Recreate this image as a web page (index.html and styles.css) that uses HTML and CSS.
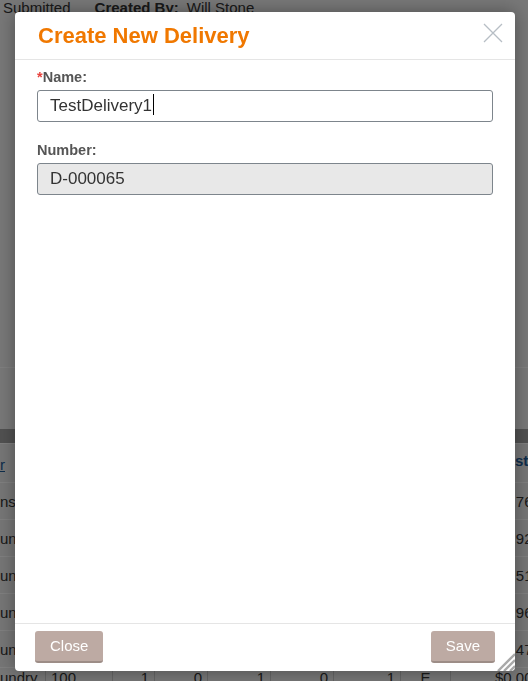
FILE: index.html
```html
<!DOCTYPE html>
<html>
<head>
    <title>Create New Delivery</title>
    <meta charset="UTF-8">
    <link rel="stylesheet" href="styles.css">
</head>
<body>
    <div class="page">
        <div class="summary">
            <div class="meta">
                <span>Submitted</span>
                <span class="meta-label">Created By:</span>
                <span>Will Stone</span>
            </div>
        </div>
        <div class="toolbar"></div>

        <div class="grid">
            <div class="grid-row grid-head">
                <div class="cell"><a href="#">r</a></div>
                <div class="cell"></div><div class="cell"></div><div class="cell"></div>
                <div class="cell"></div><div class="cell"></div><div class="cell"></div>
                <div class="cell"></div>
                <div class="cell cost">Cost</div>
            </div>
            <div class="grid-row">
                <div class="cell">ns</div>
                <div class="cell"></div><div class="cell"></div><div class="cell"></div>
                <div class="cell"></div><div class="cell"></div><div class="cell"></div>
                <div class="cell"></div>
                <div class="cell cost">$4.76</div>
            </div>
            <div class="grid-row">
                <div class="cell">undry</div>
                <div class="cell"></div><div class="cell"></div><div class="cell"></div>
                <div class="cell"></div><div class="cell"></div><div class="cell"></div>
                <div class="cell"></div>
                <div class="cell cost">$2.92</div>
            </div>
            <div class="grid-row">
                <div class="cell">undry</div>
                <div class="cell"></div><div class="cell"></div><div class="cell"></div>
                <div class="cell"></div><div class="cell"></div><div class="cell"></div>
                <div class="cell"></div>
                <div class="cell cost">$8.51</div>
            </div>
            <div class="grid-row">
                <div class="cell">undry</div>
                <div class="cell"></div><div class="cell"></div><div class="cell"></div>
                <div class="cell"></div><div class="cell"></div><div class="cell"></div>
                <div class="cell"></div>
                <div class="cell cost">$1.96</div>
            </div>
            <div class="grid-row">
                <div class="cell">undry</div>
                <div class="cell"></div><div class="cell"></div><div class="cell"></div>
                <div class="cell"></div><div class="cell"></div><div class="cell"></div>
                <div class="cell"></div>
                <div class="cell cost">$3.47</div>
            </div>
            <div class="grid-row grid-last">
                <div class="cell">undry</div>
                <div class="cell">100</div>
                <div class="cell num">1</div>
                <div class="cell num">0</div>
                <div class="cell num">1</div>
                <div class="cell num">0</div>
                <div class="cell num">1</div>
                <div class="cell center">E</div>
                <div class="cell cost">$0.00</div>
            </div>
        </div>
    </div>

    <div class="backdrop"></div>

    <div class="dialog">
        <div class="dialog-header">
            <h2 class="dialog-title">Create New Delivery</h2>
            <svg class="dialog-close" width="20" height="20" viewBox="0 0 20 20">
                <path d="M1 1 L19 19 M19 1 L1 19" stroke="#b7bec5" stroke-width="1.3" fill="none"/>
            </svg>
        </div>

        <div class="dialog-body">
            <div class="field-group">
                <label class="field-label"><span class="req">*</span>Name:</label>
                <div class="field">TestDelivery1<span class="caret"></span></div>
            </div>
            <div class="field-group">
                <label class="field-label">Number:</label>
                <div class="field field-readonly">D-000065</div>
            </div>
        </div>

        <div class="dialog-footer">
            <button class="btn">Close</button>
            <button class="btn">Save</button>
        </div>

        <svg class="grip" width="20" height="20" viewBox="0 0 20 20">
            <path d="M20 3 L3 20 M20 9 L9 20 M20 15 L15 20" stroke="#a9a9a9" stroke-width="2.4" fill="none"/>
        </svg>
    </div>
</body>
</html>
```

FILE: styles.css
```css
html, body {
    overflow: hidden;
}

body {
    margin: 0;
    font-family: "Liberation Sans", Arial, sans-serif;
    background: #f0f0f0;
    color: #333;
}

.page {
    width: 560px;
}

/* background page */
.summary {
    height: 368px;
    box-sizing: border-box;
    border-bottom: 1px solid #fff;
    font-size: 15px;
    line-height: 15px;
    padding-left: 3px;
}

.meta {
    display: flex;
}

.meta-label {
    font-weight: bold;
    margin-left: 24px;
    margin-right: 8px;
}

.toolbar {
    margin-top: 61px;
    height: 15px;
    box-sizing: border-box;
    background: #a2a2a2;
    border-bottom: 1px solid #fff;
}

.grid-row {
    display: grid;
    grid-template-columns: 46px 67px 42px 53px 63px 63px 67px 50px 109px;
    height: 37px;
    box-sizing: border-box;
    border-bottom: 1px solid #fff;
    font-size: 15px;
    background: #ececec;
}

.grid-head {
    height: 39px;
}

.cell {
    display: flex;
    align-items: center;
    padding: 0 5px;
    border-right: 1px solid #c8c8c8;
    white-space: nowrap;
    overflow: hidden;
}

.cell:first-child {
    padding-left: 0;
}

.grid-head .cell {
    align-items: flex-start;
    padding-top: 8px;
    color: #1c5a96;
    font-weight: bold;
}

.grid-head a {
    color: #1c5a96;
    font-weight: normal;
    margin-top: 4px;
}

.grid-last .cell {
    align-items: flex-start;
    padding-top: 1px;
}

.num {
    justify-content: flex-end;
}

.center {
    justify-content: center;
}

.cost {
    padding-left: 44px;
    border-right: none;
}

.backdrop {
    position: fixed;
    inset: 0;
    background: rgba(0, 0, 0, 0.5);
}

/* dialog */
.dialog {
    position: absolute;
    left: 15px;
    top: 12px;
    width: 500px;
    height: 659px;
    background: #fff;
    border-radius: 4px;
    box-shadow: 0 0 18px rgba(0, 0, 0, 0.35);
    display: flex;
    flex-direction: column;
}

.dialog-header {
    height: 48px;
    box-sizing: border-box;
    border-bottom: 1px solid #e5e5e5;
    padding: 11px 12px 0 23px;
    display: flex;
    justify-content: space-between;
    align-items: flex-start;
}

.dialog-title {
    margin: 0;
    font-size: 22px;
    line-height: 25px;
    font-weight: bold;
    color: #f07800;
}

.dialog-close {
    margin-top: 0;
}

.dialog-body {
    flex: 1;
    padding: 9px 22px 0;
}

.field-group + .field-group {
    margin-top: 20px;
}

.field-label {
    display: block;
    font-size: 14.5px;
    line-height: 17px;
    font-weight: bold;
    color: #555;
    margin-bottom: 4px;
}

.req {
    color: #e8413c;
}

.field {
    height: 32px;
    box-sizing: border-box;
    border: 1px solid #7d858c;
    border-radius: 3px;
    padding: 0 12px;
    font-size: 17px;
    line-height: 30px;
    color: #333;
}

.field-readonly {
    background: #e8e8e8;
}

.caret {
    display: inline-block;
    width: 1px;
    height: 21px;
    margin-left: 1px;
    background: #000;
    vertical-align: -4px;
}

.dialog-footer {
    height: 48px;
    box-sizing: border-box;
    border-top: 1px solid #e5e5e5;
    padding: 7px 20px 0;
    display: flex;
    justify-content: space-between;
    align-items: flex-start;
}

.btn {
    height: 32px;
    box-sizing: border-box;
    padding: 0 15px;
    border: none;
    border-bottom: 2px solid #9d8d87;
    border-radius: 3px;
    background: #bdaaa3;
    color: #fff;
    font-family: "Liberation Sans", Arial, sans-serif;
    font-size: 15px;
    line-height: 30px;
}

.grip {
    position: absolute;
    right: 0;
    bottom: 0;
}
```
